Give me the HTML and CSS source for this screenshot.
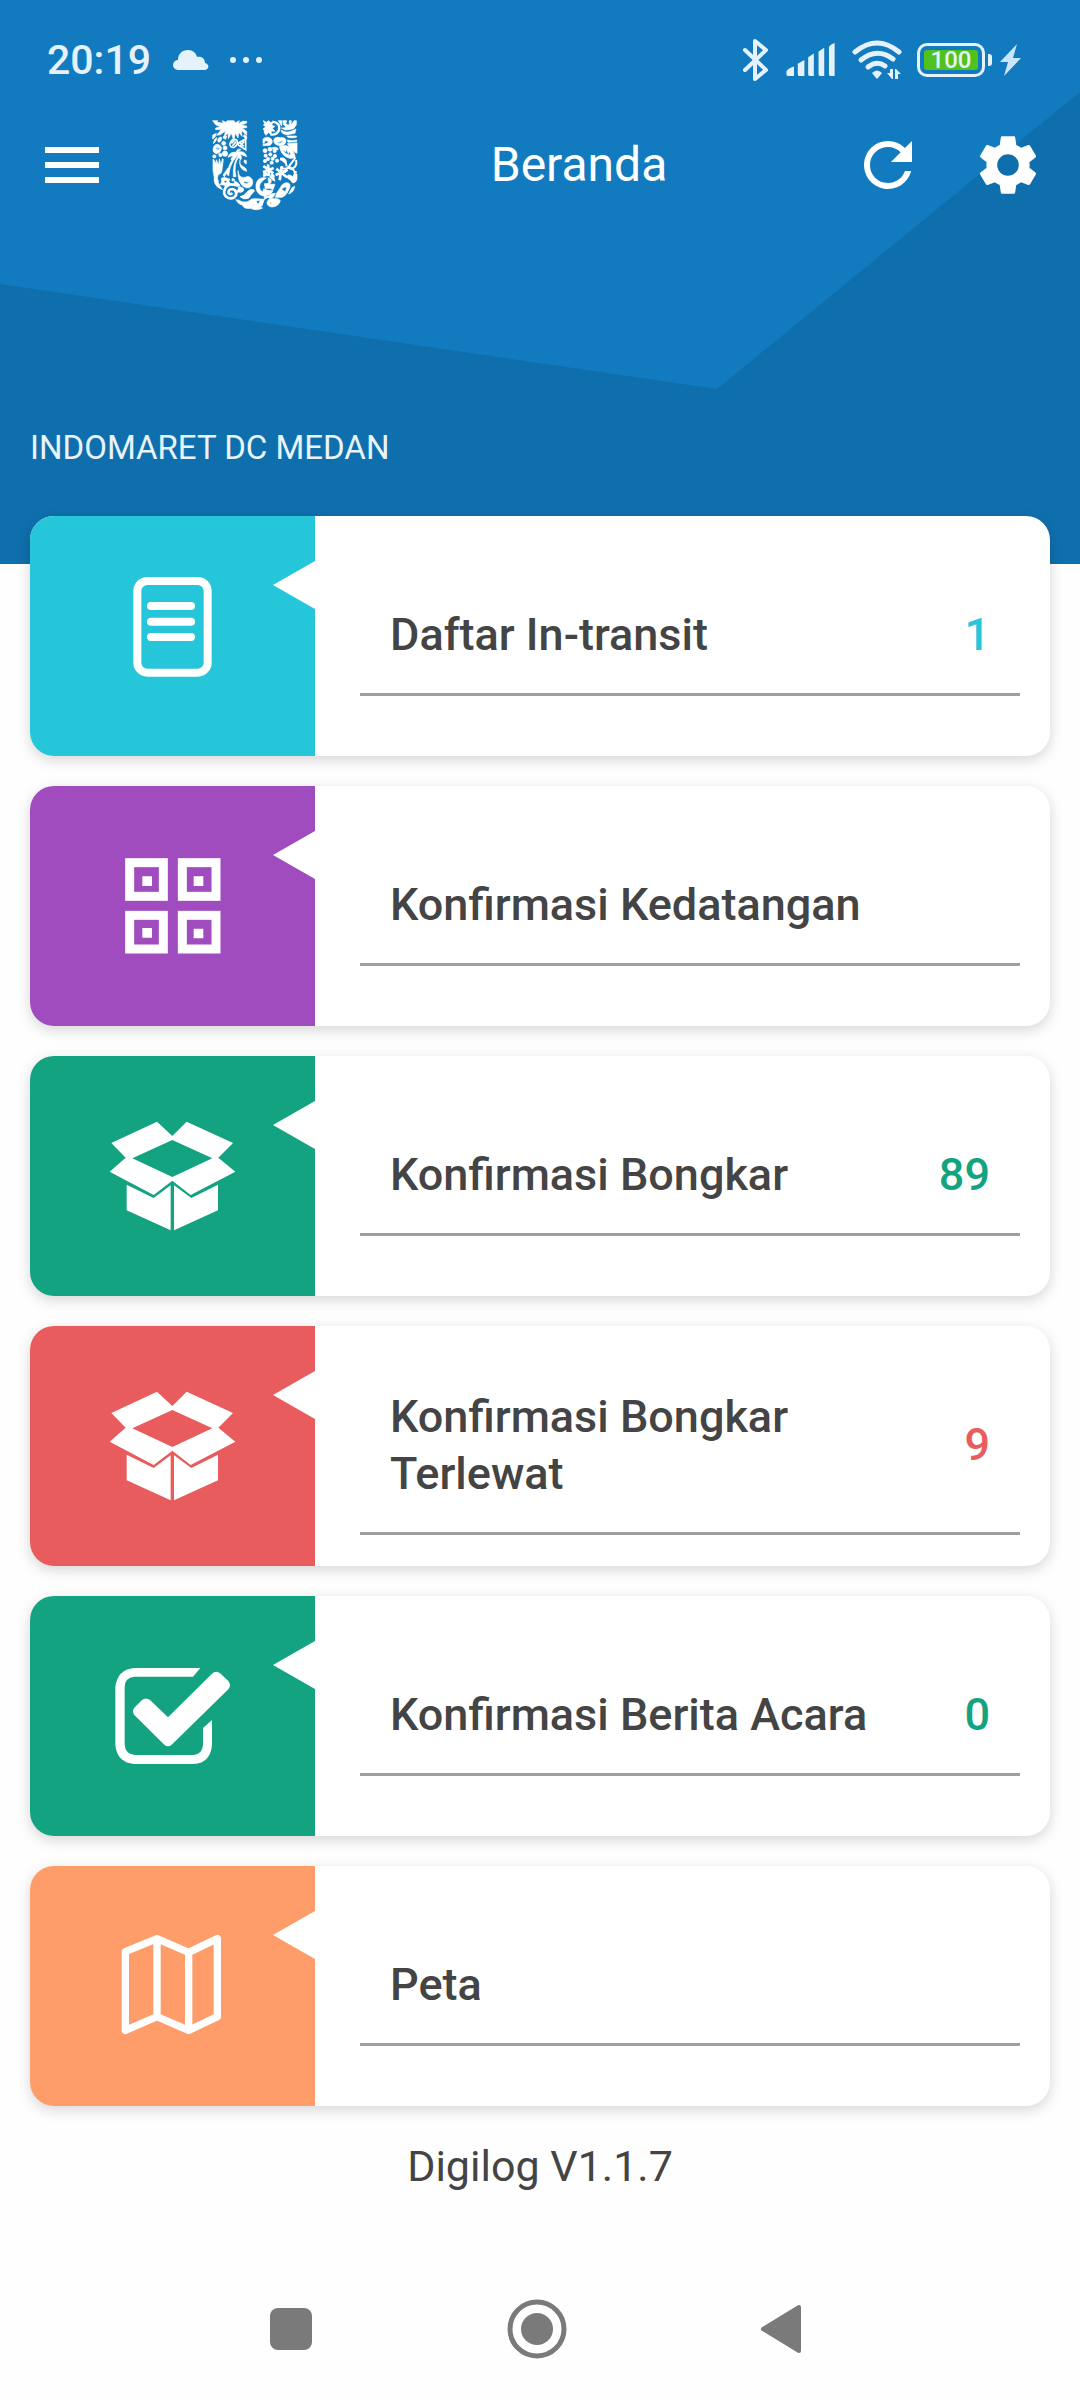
FILE: index.html
```
<!DOCTYPE html>
<html lang="id">
    <head>
        <meta charset="UTF-8">
        <meta name="viewport" content="width=device-width, initial-scale=1">
        <title>Beranda</title>
        <link rel="stylesheet" href="styles.css">
    </head>
    <body>
        <header class="header">
            <svg class="header-shape" viewBox="0 0 1080 564" preserveAspectRatio="none" aria-hidden="true">
                <polygon points="0,0 1080,0 1080,92 717,389 0,284" fill="#127bbf"/>
            </svg>

            <div class="status-bar">
                <time class="clock">20:19</time>
                <svg class="cloud" width="36" height="22" viewBox="0 0 36 22">
                    <path d="M5 21a5 5 0 0 1 0-10C5 5 9 1 15 1c5 0 8 3 9 7 5-1 8 2 8 6 5 1 4 7 0 7z"/>
                </svg>
                <svg class="dots" width="34" height="8" viewBox="0 0 34 8">
                    <circle cx="4" cy="4" r="3"/><circle cx="17" cy="4" r="3"/><circle cx="30" cy="4" r="3"/>
                </svg>
                <div class="status-icons">
                    <svg width="28" height="44" viewBox="0 0 28 44">
                        <path d="M3 12l21 20-11 9V3l11 9L3 32" fill="none" stroke="#e5f1fb" stroke-width="4" stroke-linejoin="round" stroke-linecap="round"/>
                    </svg>
                    <svg width="52" height="34" viewBox="0 0 52 36">
                        <path d="M0 30q3-4 8-5v10H2q-2 0-2-2zM12 22l7-4v17h-5q-2 0-2-2zM23 15l6-4v24h-4q-2 0-2-2zM34 9l6-4v30h-4q-2 0-2-2zM45 4q2-3 6-4v35h-4q-2 0-2-2z"/>
                    </svg>
                    <svg width="50" height="40" viewBox="0 0 50 40">
                        <g fill="none" stroke="#e5f1fb" stroke-width="5" stroke-linecap="round">
                            <path d="M3 12Q25-6 47 12"/>
                            <path d="M9 20Q25 7 41 19"/>
                            <path d="M16 27Q25 20 33 26"/>
                        </g>
                        <path d="M20 33q5-5 10 0l-4 5q-1 1-2 0zM38 29h3v10h-1l-5-6h3zM43 39V29h1l5 5h-3v5z"/>
                    </svg>
                    <div class="battery"><span>100</span></div>
                    <svg class="bolt" width="22" height="34" viewBox="0 0 22 34">
                        <path d="M17 1L0 19h8L4 33l17-18h-8z" fill="#c9e6fa"/>
                    </svg>
                </div>
            </div>

            <nav class="app-bar">
                <button class="icon-button" type="button" aria-label="Menu">
                    <svg width="72" height="72" viewBox="0 0 24 24"><path d="M3 18h18v-2H3v2zm0-5h18v-2H3v2zm0-7v2h18V6H3z"/></svg>
                </button>
                <svg class="logo" width="86" height="92" viewBox="66 58 258 276" stroke="#fff" stroke-width="2" role="img" aria-label="Logo">
                    <!-- left arm -->
                    <path d="M68 63h15l-3 4 20 4-3-8 11 5 4-5h20l4 6 12-6-3 10 12-8h13v5l-17 6 17 3v5l-14 1 14 10v12l-16-15 2 18-10-12-2 17-8-15-5 23-7-23-9 17-1-17-11 12 3-18-15 11-11 2 14-18-17 1v-5l14-3-14-7z"/>
                    <path d="M68 106l11-5-4 11-7 6zM162 105l8 5v8l-10-7z"/>
                    <path d="M70 131q3-16 11-17-2 9-9 17zM83 121q2-9 11-9 4 9-6 16-6-1-5-7z"/>
                    <path d="M101 109l9 1-3 9-8-4z"/>
                    <path d="M69 151q1-17 14-17 13 4 11 15-5 14-15 13-10-3-10-11zM76 148l8-8-3 15 10-10" fill-rule="evenodd"/>
                    <circle cx="105" cy="145" r="6"/><circle cx="105" cy="162" r="8"/><circle cx="91" cy="166" r="5"/><circle cx="101" cy="131" r="6"/><circle cx="73" cy="170" r="5"/>
                    <g fill="none" stroke="#fff" stroke-width="5">
                        <ellipse cx="131" cy="131" rx="10" ry="13" transform="rotate(35 131 131)"/>
                        <path d="M124 131l10-9M127 139l12-13M145 130l22-12v32l-22-14zM149 128l12 12M150 139l13-14"/>
                    </g>
                    <path d="M114 173q5-18 25-15 0-12 14-9l-8 8q20-5 25 14l-20-8q8 9 2 18l-11-15q-5 12-18 15 1-9 8-13-9 0-17 5z"/>
                    <path d="M138 166q-20 20-28 57l6 6q3-37 25-59zM144 169q-16 22-14 62h8q-9-36 10-61z"/>
                    <path d="M69 178q7 5 11 18l-1-16 7 16 2-19 5 19 4-19 3 2-4 32q-2 14-11 13l-5 19-8-13-3-18z"/>
                    <path d="M99 226l15-21 4 5-15 21zM150 180q-3 14 8 20 12 5 12 15l-10-4q-14-9-10-31zM163 181q-4 8 6 12v-10z"/>
                    <path d="M144 213q2 24 22 20 12-7 21 7 5 17-10 24-17 3-26-15-7-9-7-36zM160 244q2 10 12 8l9-8q-8 7-21 0z" fill-rule="evenodd"/>
                    <path d="M73 231q13 4 12 17 4 12 13 22-17-5-23-18-4-9-2-21z"/>
                    <path d="M94 236l10-3 7 3 8 2-2 8 5 7-9 4-6 5-6-6-10-1 4-9zM102 243q-1 8 6 7 5-4 0-8z" fill-rule="evenodd"/>
                    <!-- bottom curve -->
                    <path d="M136 256q-22-7-31 11-8 18 8 27 17 6 25-7 3-16-11-19-13 1-11 12 5 7 11 0" fill="none" stroke="#fff" stroke-width="8"/>
                    <path d="M132 244q12 2 18 13-6 6-14 2zM146 268q-4-8 5-7 12 3 10 12-7 8-16 4l-4 4-1-8zM126 237q5-1 9 4l-9 3z" fill-rule="evenodd"/>
                    <path d="M150 291q12-2 20-13 14-15 24-5-12 13-18 23-14 6-26-5z"/>
                    <path d="M137 300q12 0 18 6 17 3 23-3 5-7 18-6l27 2-7 20q-7 4-16 2 9 0 18 4-18 10-37 1-19 3-24-10-11-1-20-16zM200 303q-2 8 5 9l7-10z" fill-rule="evenodd"/>
                    <path d="M229 235q-26-6-31 20-3 27 22 34 21 0 29-16l-16-1-12-5q-1 14-10 4-10-19 18-36z"/>
                    <path d="M223 252l13-1-2-17q17 7 5 20h16l-6 16q-12-7-23-3zM238 231l12-5 5 19-9-5z"/>
                    <path d="M223 289l13 3-13 7zM232 291q12-13 24-10-4 15-16 16z"/>
                    <path d="M231 308q4-14 21-11 15-2 19 6-5 18-25 19-15-1-15-14zM239 308q1 8 8 2z" fill-rule="evenodd"/>
                    <path d="M256 293q4-16 12-24 11-24 27-19 10 5 1 21-12 26-29 22zM275 270q8-11 13-8 3 3-2 14z" fill-rule="evenodd"/>
                    <path d="M296 283l10-19 8-4q-2 18-18 23z"/>
                    <!-- right arm -->
                    <path d="M220 63l9 5 7-5 5 5h8l-4 9 10 3-8 6 8 9-11-1-1 10-8-5-7 8-5-7v-7l-4-5 8-6-7-6 4-3z"/>
                    <path d="M247 66q25 3 20 26-9 16-26 12" fill="none" stroke="#fff" stroke-width="7"/>
                    <path d="M265 63h10v16zM278 63h12l-3 10 11 4V63h6l-1 14 9-14h7v12l-8 12-14 3-12 1-11-6q10 1 14-3l-8-8zM274 91q14 14 44-3l-3 13-23 4q-19-1-18-14z"/>
                    <path d="M219 118q11-10 24-1 9 11-3 20l-21 1v-5q17 0 16-9l-10-1q-1 8-6 8z"/>
                    <path d="M251 123q2-13 20-9 18-2 17 12-3 12-17 12-19-2-20-15zM260 128q15 8 20-7-7 7-20 7z" fill-rule="evenodd"/>
                    <path d="M290 109h29v4q-15 3-25 0zM292 121q14 4 28 0v5l-26 2zM292 132l29-2v31q-13-5-29-29z"/>
                    <path d="M268 141q25-10 38 9 8 8 10 24-18 6-31-4-12-9-17-29zM277 149q8 16 26 18l-5-13-3 8-6-14-2 9z" fill-rule="evenodd"/>
                    <circle cx="225" cy="153" r="6"/><circle cx="240" cy="149" r="6"/><circle cx="254" cy="154" r="5"/><circle cx="227" cy="168" r="5"/><circle cx="241" cy="164" r="5"/><circle cx="255" cy="169" r="5"/><circle cx="234" cy="178" r="5"/><circle cx="248" cy="177" r="5"/><circle cx="261" cy="183" r="5"/><circle cx="245" cy="189" r="5"/><circle cx="225" cy="184" r="5"/>
                    <path d="M247 144q10-4 17 2v5l-17-3z"/>
                    <path d="M316 175l-18 24q-2 13-28 5M318 181q5 21-14 27l-14-6M270 179q17 1 20 21M294 202q17 2 20 17l6-3" fill="none" stroke="#fff" stroke-width="6"/>
                    <path d="M271 175q13-3 18 9v8q-12-4-18-17z"/>
                    <g fill="none" stroke="#fff" stroke-width="8">
                        <path d="M234 194l3 35M220 199l30 22M219 218l32-13M276 199l-7 43M259 207l32 26M257 226l36-16"/>
                    </g>
                    <path d="M220 222l10-4 5 9-15 4zM246 221l8 8-4 4-8-6zM281 212l10 2-6 6z"/>
                    <path d="M292 235q-1-13 10-8l6 4q4-13 13-8v15q-3 12-13 12-6-10-16-15z"/>
                </svg>
                <h1>Beranda</h1>
                <button class="icon-button" type="button" aria-label="Muat ulang">
                    <svg width="72" height="72" viewBox="0 0 24 24"><path d="M17.65 6.35A7.96 7.96 0 0 0 12 4a8 8 0 1 0 7.73 10h-2.08A6 6 0 1 1 12 6c1.66 0 3.14.69 4.22 1.78L13 11h7V4z"/></svg>
                </button>
                <button class="icon-button settings" type="button" aria-label="Pengaturan">
                    <svg width="72" height="72" viewBox="0 0 24 24"><path d="M19.14 12.94c.04-.3.06-.61.06-.94 0-.32-.02-.64-.07-.94l2.03-1.58c.18-.14.23-.41.12-.61l-1.92-3.32c-.12-.22-.37-.29-.59-.22l-2.39.96c-.5-.38-1.03-.7-1.62-.94l-.36-2.54c-.04-.24-.24-.41-.48-.41h-3.84c-.24 0-.43.17-.47.41l-.36 2.54c-.59.24-1.13.57-1.62.94l-2.39-.96c-.22-.08-.47 0-.59.22L2.74 8.87c-.12.21-.08.47.12.61l2.03 1.58c-.05.3-.09.63-.09.94s.02.64.07.94l-2.03 1.58c-.18.14-.23.41-.12.61l1.92 3.32c.12.22.37.29.59.22l2.39-.96c.5.38 1.03.7 1.62.94l.36 2.54c.05.24.24.41.48.41h3.84c.24 0 .44-.17.47-.41l.36-2.54c.59-.24 1.13-.56 1.62-.94l2.39.96c.22.08.47 0 .59-.22l1.92-3.32c.12-.22.07-.47-.12-.61l-2.01-1.58zM12 15.6c-1.98 0-3.6-1.62-3.6-3.6s1.62-3.6 3.6-3.6 3.6 1.62 3.6 3.6-1.62 3.6-3.6 3.6z"/></svg>
                </button>
            </nav>

            <p class="location">INDOMARET DC MEDAN</p>
        </header>

        <main class="menu">
            <a class="card cyan" href="#in-transit">
                <span class="card-icon">
                    <svg width="135" height="120" viewBox="255 228 405 360">
                        <rect x="352" y="243" width="211" height="275" rx="30" fill="none" stroke="#fff" stroke-width="24"/>
                        <path d="M393 318h120M393 365h120M393 411h120" stroke="#fff" stroke-width="24" stroke-linecap="round"/>
                    </svg>
                </span>
                <span class="card-body"><span class="card-line"><span class="card-title">Daftar In-transit</span><span class="count">1</span></span></span>
            </a>

            <a class="card purple" href="#kedatangan">
                <span class="card-icon">
                    <svg width="135" height="120" viewBox="255 198 405 360">
                        <g fill="none" stroke="#fff" stroke-width="27">
                            <rect x="329" y="248" width="101" height="101"/><rect x="487" y="248" width="101" height="101"/>
                            <rect x="329" y="406" width="101" height="101"/><rect x="487" y="406" width="101" height="101"/>
                        </g>
                        <path d="M367 289h29v29h-29zM521 289h29v29h-29zM367 444h29v29h-29zM521 446h29v29h-29z"/>
                    </svg>
                </span>
                <span class="card-body"><span class="card-line"><span class="card-title">Konfirmasi Kedatangan</span></span></span>
            </a>

            <a class="card green" href="#bongkar">
                <span class="card-icon">
                    <svg width="135" height="120" viewBox="255 198 405 360">
                        <path d="M411 215l46 43 43-43 139 64-44 44 51 42-134 70-55-43-56 43-132-70 48-42-43-44zM457 270l-120 55 120 56 120-56z" fill-rule="evenodd"/>
                        <path d="M320 404l81 40 51-38v135l-132-60zM594 404l-80 40-52-38v135l132-60z"/>
                    </svg>
                </span>
                <span class="card-body"><span class="card-line"><span class="card-title">Konfirmasi Bongkar</span><span class="count">89</span></span></span>
            </a>

            <a class="card red" href="#bongkar-terlewat">
                <span class="card-icon">
                    <svg width="135" height="120" viewBox="255 198 405 360">
                        <path d="M411 215l46 43 43-43 139 64-44 44 51 42-134 70-55-43-56 43-132-70 48-42-43-44zM457 270l-120 55 120 56 120-56z" fill-rule="evenodd"/>
                        <path d="M320 404l81 40 51-38v135l-132-60zM594 404l-80 40-52-38v135l132-60z"/>
                    </svg>
                </span>
                <span class="card-body"><span class="card-line"><span class="card-title">Konfirmasi Bongkar Terlewat</span><span class="count">9</span></span></span>
            </a>

            <a class="card green" href="#berita-acara">
                <span class="card-icon">
                    <svg width="135" height="120" viewBox="255 198 405 360">
                        <path d="M541 234l-22 26H343q-29 3-29 31v173q2 29 31 31h174q28-1 30-31v-50l27-24v74q-4 54-55 58H342q-52-6-56-58V291q6-52 56-57z"/>
                        <path d="M366 330q12-9 24 0l54 52 132-131q12-11 26 0l23 22q10 12 0 25L455 464q-11 10-22 0l-90-89q-8-11 0-22z"/>
                    </svg>
                </span>
                <span class="card-body"><span class="card-line"><span class="card-title">Konfirmasi Berita Acara</span><span class="count">0</span></span></span>
            </a>

            <a class="card orange" href="#peta">
                <span class="card-icon">
                    <svg width="135" height="120" viewBox="255 198 405 360">
                        <path d="M316 275l95-39 95 41 86-41v234l-86 41-95-41-95 41zM411 236v234M506 277v234" fill="none" stroke="#fff" stroke-width="22" stroke-linejoin="round"/>
                    </svg>
                </span>
                <span class="card-body"><span class="card-line"><span class="card-title">Peta</span></span></span>
            </a>
        </main>

        <footer>
            <p class="version">Digilog V1.1.7</p>
            <div class="system-nav">
                <button type="button" aria-label="Aplikasi terbaru">
                    <svg width="60" height="60" viewBox="0 0 60 60"><rect x="9" y="9" width="42" height="42" rx="8"/></svg>
                </button>
                <button type="button" aria-label="Layar utama">
                    <svg width="60" height="60" viewBox="0 0 60 60"><circle cx="30" cy="30" r="27" fill="none" stroke="#7a7a7a" stroke-width="5"/><circle cx="30" cy="30" r="16"/></svg>
                </button>
                <button type="button" aria-label="Kembali">
                    <svg width="60" height="60" viewBox="0 0 60 60"><path d="M10 30L46 8v44z" stroke="#7a7a7a" stroke-width="4" stroke-linejoin="round"/></svg>
                </button>
            </div>
        </footer>
    </body>
</html>
```
FILE: styles.css
```
* {
    box-sizing: border-box;
}

body {
    margin: 0;
    font-family: Roboto, Arial, sans-serif;
    background: #fefefe;
    color: #444444;
}

svg {
    display: block;
    flex: none;
}

button {
    padding: 0;
    border: none;
    background: none;
    cursor: pointer;
}

.header {
    position: relative;
    height: 564px;
    background: #0f6fad;
    color: white;
    fill: white;
}

/* lighter facet behind the bars */
.header-shape {
    position: absolute;
    inset: 0;
    width: 100%;
    height: 100%;
}

.status-bar {
    position: relative;
    display: flex;
    align-items: center;
    height: 120px;
    padding: 0 58px 0 47px;
    color: #e5f1fb;
    fill: #e5f1fb;
}

.clock {
    font-size: 41px;
    font-weight: 500;
    line-height: 48px;
}

.cloud {
    margin-left: 22px;
}

.dots {
    margin-left: 20px;
}

.status-icons {
    display: flex;
    align-items: center;
    gap: 15px;
    margin-left: auto;
}

.battery {
    position: relative;
    width: 68px;
    height: 34px;
    padding: 4px;
    border: 3px solid #e5f1fb;
    border-radius: 10px;

    span {
        display: block;
        height: 20px;
        border-radius: 3px;
        background: #4fc21e;
        font-size: 24px;
        font-weight: 500;
        line-height: 21px;
        text-align: center;
    }
}

.battery::after {
    content: "";
    position: absolute;
    top: 8px;
    right: -10px;
    width: 4px;
    height: 12px;
    border-radius: 0 3px 3px 0;
    background: #e5f1fb;
}

.app-bar {
    position: relative;
    display: flex;
    align-items: center;
    height: 90px;
    padding: 0 36px;

    h1 {
        flex: 1;
        margin: 0;
        font-size: 48px;
        font-weight: 400;
        line-height: 56px;
        text-align: center;
    }
}

.icon-button {
    fill: white;
}

.logo {
    margin: 0 8px 0 104px;
}

.settings {
    margin-left: 48px;
}

.location {
    position: relative;
    margin: 217px 30px 0;
    color: #e9f3fa;
    font-size: 33px;
    line-height: 42px;
}

.menu {
    position: relative;
    display: flex;
    flex-direction: column;
    gap: 30px;
    margin-top: -48px;
    padding: 0 30px;
}

.card {
    display: flex;
    min-height: 240px;
    border-radius: 24px;
    background: white;
    box-shadow: 0 4px 14px rgba(0, 0, 0, 0.16);
    color: #444444;
    text-decoration: none;
    overflow: hidden;
}

.card-icon {
    position: relative;
    display: flex;
    flex: none;
    align-items: center;
    justify-content: center;
    width: 285px;
    background: var(--accent);
    fill: white;
}

/* notch pointing into the coloured side */
.card-icon::after {
    content: "";
    position: absolute;
    top: 45px;
    right: 0;
    border: 24px solid transparent;
    border-left-width: 0;
    border-right: 42px solid white;
}

.card-body {
    display: flex;
    flex: 1;
    align-items: center;
    padding: 0 30px 0 45px;
}

.card-line {
    display: flex;
    flex: 1;
    align-items: center;
    justify-content: space-between;
    padding: 30px;
    border-bottom: 3px solid #9e9e9e;
    font-size: 45px;
    font-weight: 500;
    line-height: 57px;
}

.card-title {
    max-width: 500px;
}

.count {
    color: var(--accent);
}

.cyan {
    --accent: #26c6da;
}

.purple {
    --accent: #a04bbe;
}

.green {
    --accent: #14a381;
}

.red {
    --accent: #e85c5d;
}

.orange {
    --accent: #fe9d69;
}

.version {
    margin: 35px 0 0;
    font-size: 43px;
    line-height: 50px;
    text-align: center;
}

.system-nav {
    display: flex;
    justify-content: center;
    gap: 186px;
    padding: 108px 6px 40px 0;
    fill: #7a7a7a;

    button {
        fill: inherit;
    }
}
```
